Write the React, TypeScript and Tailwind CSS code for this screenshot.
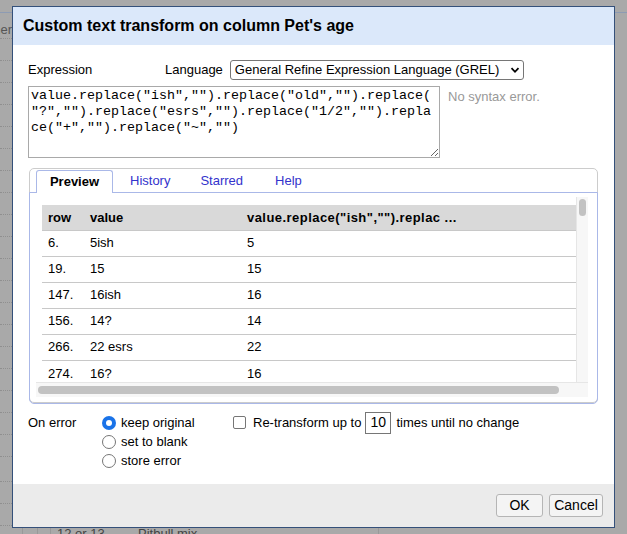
import React from 'react';

const rows = [
  { row: '6.', value: '5ish', result: '5' },
  { row: '19.', value: '15', result: '15' },
  { row: '147.', value: '16ish', result: '16' },
  { row: '156.', value: '14?', result: '14' },
  { row: '266.', value: '22 esrs', result: '22' },
  { row: '274.', value: '16?', result: '16' },
];

const expression =
  'value.replace("ish","").replace("old","").replace(\n' +
  '"?","").replace("esrs","").replace("1/2","").repla\n' +
  'ce("+","").replace("~","")';

const Radio = ({ checked, label }: { checked?: boolean; label: string }) => (
  <label className="flex items-center h-[19px]">
    <span
      className={`w-[14px] h-[14px] rounded-full flex items-center justify-center ${
        checked ? 'bg-[#1a73e8]' : 'border border-[#767676] bg-white'
      }`}
    >
      {checked && <span className="w-[6px] h-[6px] rounded-full bg-white" />}
    </span>
    <span className="ml-[5px]">{label}</span>
  </label>
);

export default function App() {
  return (
    <div
      className="relative w-[627px] h-[534px] overflow-hidden bg-[#a9a9a9] text-[13px] text-black"
      style={{ fontFamily: '"Liberation Sans", Arial, sans-serif' }}
    >
      {/* page behind the overlay */}
      <div className="absolute left-0 right-0 top-[12px] h-[1px] bg-[#8d9bb3]" />
      <div className="absolute right-[615px] top-[20px] text-[#555] whitespace-nowrap">Other</div>
      {[38, 60, 82, 104, 126, 148, 170, 192, 214, 236, 258, 280, 302, 324, 346, 368, 390, 412, 434, 456, 481, 503, 525].map((y) => (
        <div key={y} className="absolute left-0 w-[12px] h-0 border-t border-dotted border-[#8f8f8f]" style={{ top: y }} />
      ))}
      <div className="absolute left-[22px] top-[527px] w-[1px] h-[7px] bg-[#999]" />
      <div className="absolute left-[37px] top-[527px] w-[1px] h-[7px] bg-[#999]" />
      <div className="absolute left-[50px] top-[527px] w-[1px] h-[7px] bg-[#999]" />
      <div className="absolute left-[378px] top-[527px] w-[1px] h-[7px] bg-[#999]" />
      <div className="absolute left-[57px] top-[524px] text-[#444]">12 or 13</div>
      <div className="absolute left-[138px] top-[524px] text-[#444]">Pitbull mix</div>

      {/* dialog */}
      <div className="absolute left-[12px] top-[6px] w-[603px] h-[522px] border border-[#34507a] bg-white flex flex-col">
        <div className="h-[38px] bg-[#dbe8fa] pl-[10px] flex items-center shrink-0">
          <h1 className="text-[16px] font-bold">Custom text transform on column Pet's age</h1>
        </div>

        <div className="flex-1 pl-[15px] pr-[16px]">
          <div className="flex items-center mt-[15px] h-[20px]">
            <span className="w-[137px]">Expression</span>
            <span className="mr-[7px]">Language</span>
            <div className="w-[294px] h-[20px] border border-[#767676] rounded-[3px] flex items-center justify-between pl-[4px] pr-[3px] text-[13px] whitespace-nowrap">
              <span>General Refine Expression Language (GREL)</span>
              <svg width="10" height="10" viewBox="0 0 10 10" fill="none" stroke="#000" strokeWidth="1.8">
                <path d="M1.5 3.2 L5 6.8 L8.5 3.2" />
              </svg>
            </div>
          </div>

          <div className="flex mt-[6px]">
            <textarea
              readOnly
              wrap="off"
              value={expression}
              className="w-[412px] h-[72px] border border-[#a9a9a9] px-[2px] py-[1px] text-[13.33px] leading-[16px] overflow-hidden"
              style={{ fontFamily: '"Liberation Mono", "Courier New", monospace', resize: 'both' }}
            />
            <div className="ml-[8px] mt-[1px] text-[#999]">No syntax error.</div>
          </div>

          {/* tabs */}
          <div className="mt-[10px] ml-[1px] w-[569px] h-[235px] border border-[#cccccc] rounded-[5px] flex flex-col">
            <div className="flex items-end h-[23px] pl-[6px] shrink-0">
              <div className="h-[23px] w-[77px] border border-b-0 border-[#aab8e8] rounded-t-[3px] bg-white flex items-center justify-center font-bold relative top-[1px]">
                Preview
              </div>
              <div className="ml-[17px] h-[22px] flex items-center text-[#3333cc]">History</div>
              <div className="ml-[30px] h-[22px] flex items-center text-[#3333cc]">Starred</div>
              <div className="ml-[32px] h-[22px] flex items-center text-[#3333cc]">Help</div>
            </div>
            <div className="flex-1 border border-[#aab8e8] rounded-b-[5px] mx-[-1px] mb-[-1px] pl-[6px] pr-[8px] pt-[4px] pb-[6px]">
              <div className="flex flex-col w-[552px] h-[200px] bg-[#f7f7f7]">
                <div className="flex h-[185px]">
                  <div className="w-[540px] h-[185px] bg-white pl-[6px] pt-[8px] overflow-hidden">
                    <table className="w-[534px] border-collapse">
                      <thead>
                        <tr className="bg-[#d9d9d9] h-[25px] text-left">
                          <th className="pl-[6px] w-[42px] font-bold">row</th>
                          <th className="pl-[6px] w-[157px] font-bold">value</th>
                          <th className="pl-[6px] font-bold tracking-[0.45px]">value.replace("ish","").replac ...</th>
                        </tr>
                      </thead>
                      <tbody>
                        {rows.map((r) => (
                          <tr key={r.row} className="h-[26px] border-t border-[#c8c8c8]">
                            <td className="pl-[6px]">{r.row}</td>
                            <td className="pl-[6px]">{r.value}</td>
                            <td className="pl-[6px]">{r.result}</td>
                          </tr>
                        ))}
                      </tbody>
                    </table>
                  </div>
                  <div className="flex-1 border-l border-[#e6e6e6] pt-[2px] flex justify-center">
                    <div className="w-[7px] h-[17px] rounded-full bg-[#c2c2c2]" />
                  </div>
                </div>
                <div className="h-[15px] border-t border-[#e6e6e6] flex items-center pl-[2px]">
                  <div className="w-[521px] h-[8px] rounded-full bg-[#c2c2c2]" />
                </div>
              </div>
            </div>
          </div>

          {/* on error */}
          <div className="flex mt-[10px]">
            <div className="w-[74px] h-[19px] flex items-center">On error</div>
            <div className="flex flex-col w-[131px]">
              <Radio checked label="keep original" />
              <Radio label="set to blank" />
              <Radio label="store error" />
            </div>
            <div className="flex items-center h-[19px]">
              <span className="w-[13px] h-[13px] border border-[#767676] rounded-[2px] bg-white" />
              <span className="ml-[7px]">Re-transform up to</span>
              <span className="ml-[4px] w-[26px] h-[22px] border border-[#767676] flex items-center pl-[4px] text-[14px]">10</span>
              <span className="ml-[5px]">times until no change</span>
            </div>
          </div>
        </div>

        <div className="h-[43px] bg-[#ebebeb] flex items-center justify-end pr-[11px] shrink-0">
          <button className="w-[47px] h-[23px] border border-[#b5b5b5] rounded-[3px] bg-[#f4f4f4] text-[14px]">OK</button>
          <button className="ml-[6px] w-[54px] h-[23px] border border-[#b5b5b5] rounded-[3px] bg-[#f4f4f4] text-[14px]">Cancel</button>
        </div>
      </div>
    </div>
  );
}
